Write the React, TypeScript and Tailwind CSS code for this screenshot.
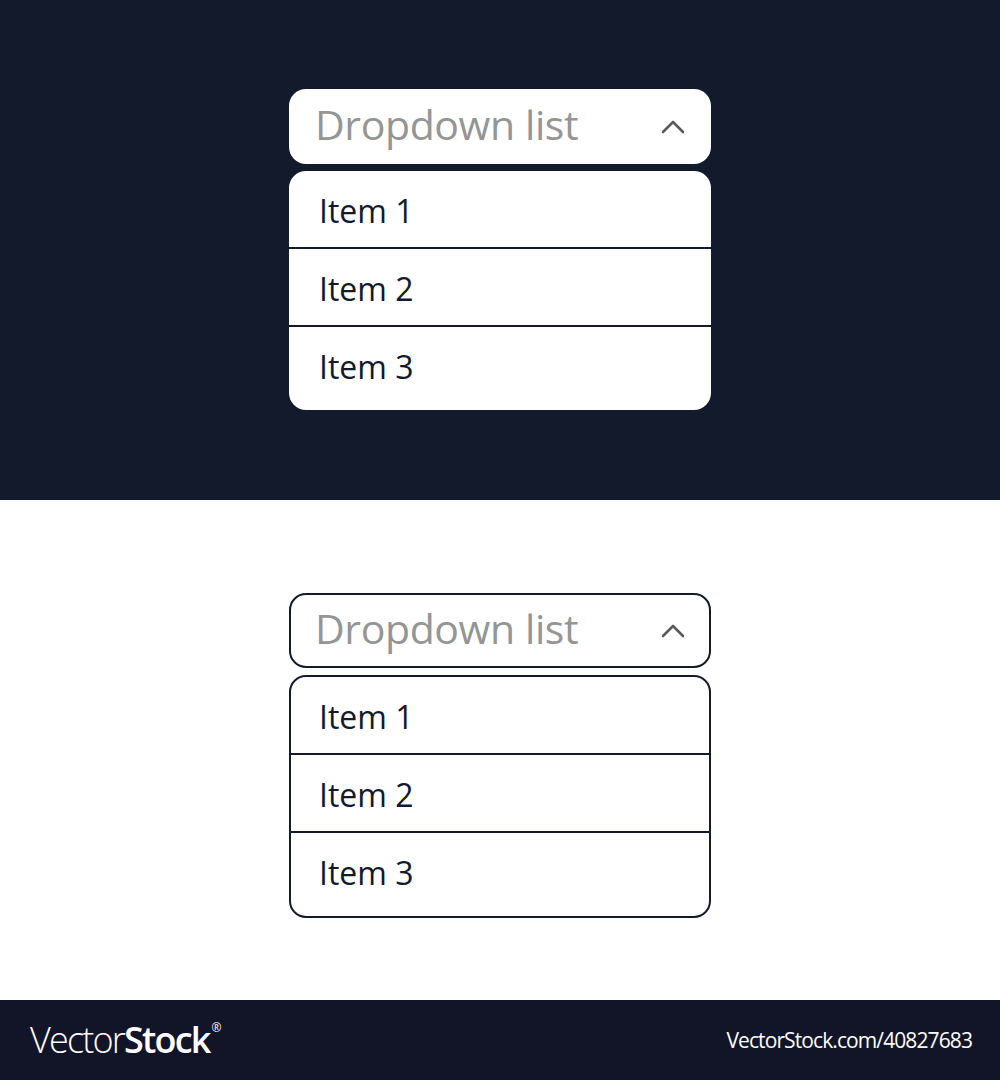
import React from "react";

const items = ["Item 1", "Item 2", "Item 3"];

function Chevron() {
  return (
    <svg width="24" height="16" viewBox="0 0 24 16" fill="none" className="shrink-0">
      <path d="M2 13 L12 3 L22 13" stroke="#5a5a5a" strokeWidth="2.6" strokeLinecap="round" strokeLinejoin="round" />
    </svg>
  );
}

function Dropdown({ outlined }: { outlined: boolean }) {
  const frame = outlined ? "border-[2.5px] border-[#131a2b]" : "";
  return (
    <div className="flex w-[422px] flex-col gap-[7px]">
      <div
        className={`flex h-[75px] items-center justify-between rounded-[17px] bg-white ${
          outlined ? "pl-[24px] pr-[24px]" : "pl-[26px] pr-[26px]"
        } ${frame}`}
      >
        <span className="pb-[4px] text-[41px] leading-none tracking-[-0.4px] text-[#959595]">Dropdown list</span>
        <Chevron />
      </div>
      <div className={`flex flex-col overflow-hidden rounded-[17px] bg-white ${frame}`}>
        {items.map((label, i) => (
          <div
            key={label}
            className={`flex items-center text-[32px] leading-none text-[#131a2b] ${outlined ? "pl-[28px]" : "pl-[30px]"} ${
              i === 2 ? "h-[83px] pb-[4px]" : "h-[78px] border-b-2 border-[#131a2b] pt-[4px]"
            }`}
          >
            {label}
          </div>
        ))}
      </div>
    </div>
  );
}

export default function App() {
  return (
    <div className="flex h-[1080px] w-[1000px] flex-col" style={{ fontFamily: '"Open Sans", "Noto Sans", sans-serif' }}>
      <section className="flex h-[500px] justify-center bg-[#131a2b] pt-[89px]">
        <Dropdown outlined={false} />
      </section>
      <section className="flex h-[500px] justify-center bg-white pt-[93px]">
        <Dropdown outlined={true} />
      </section>
      <footer className="flex h-[80px] items-center justify-between bg-[#121428] pl-[30px] pr-[28px] text-white">
        <div className="flex items-start text-[36px] leading-none tracking-[-1.8px]">
          <span className="font-light">Vector</span>
          <span className="font-semibold">Stock</span>
          <span className="ml-[2px] text-[12px] leading-none">®</span>
        </div>
        <div className="text-[21px] leading-none tracking-[-0.9px]">VectorStock.com/40827683</div>
      </footer>
    </div>
  );
}
